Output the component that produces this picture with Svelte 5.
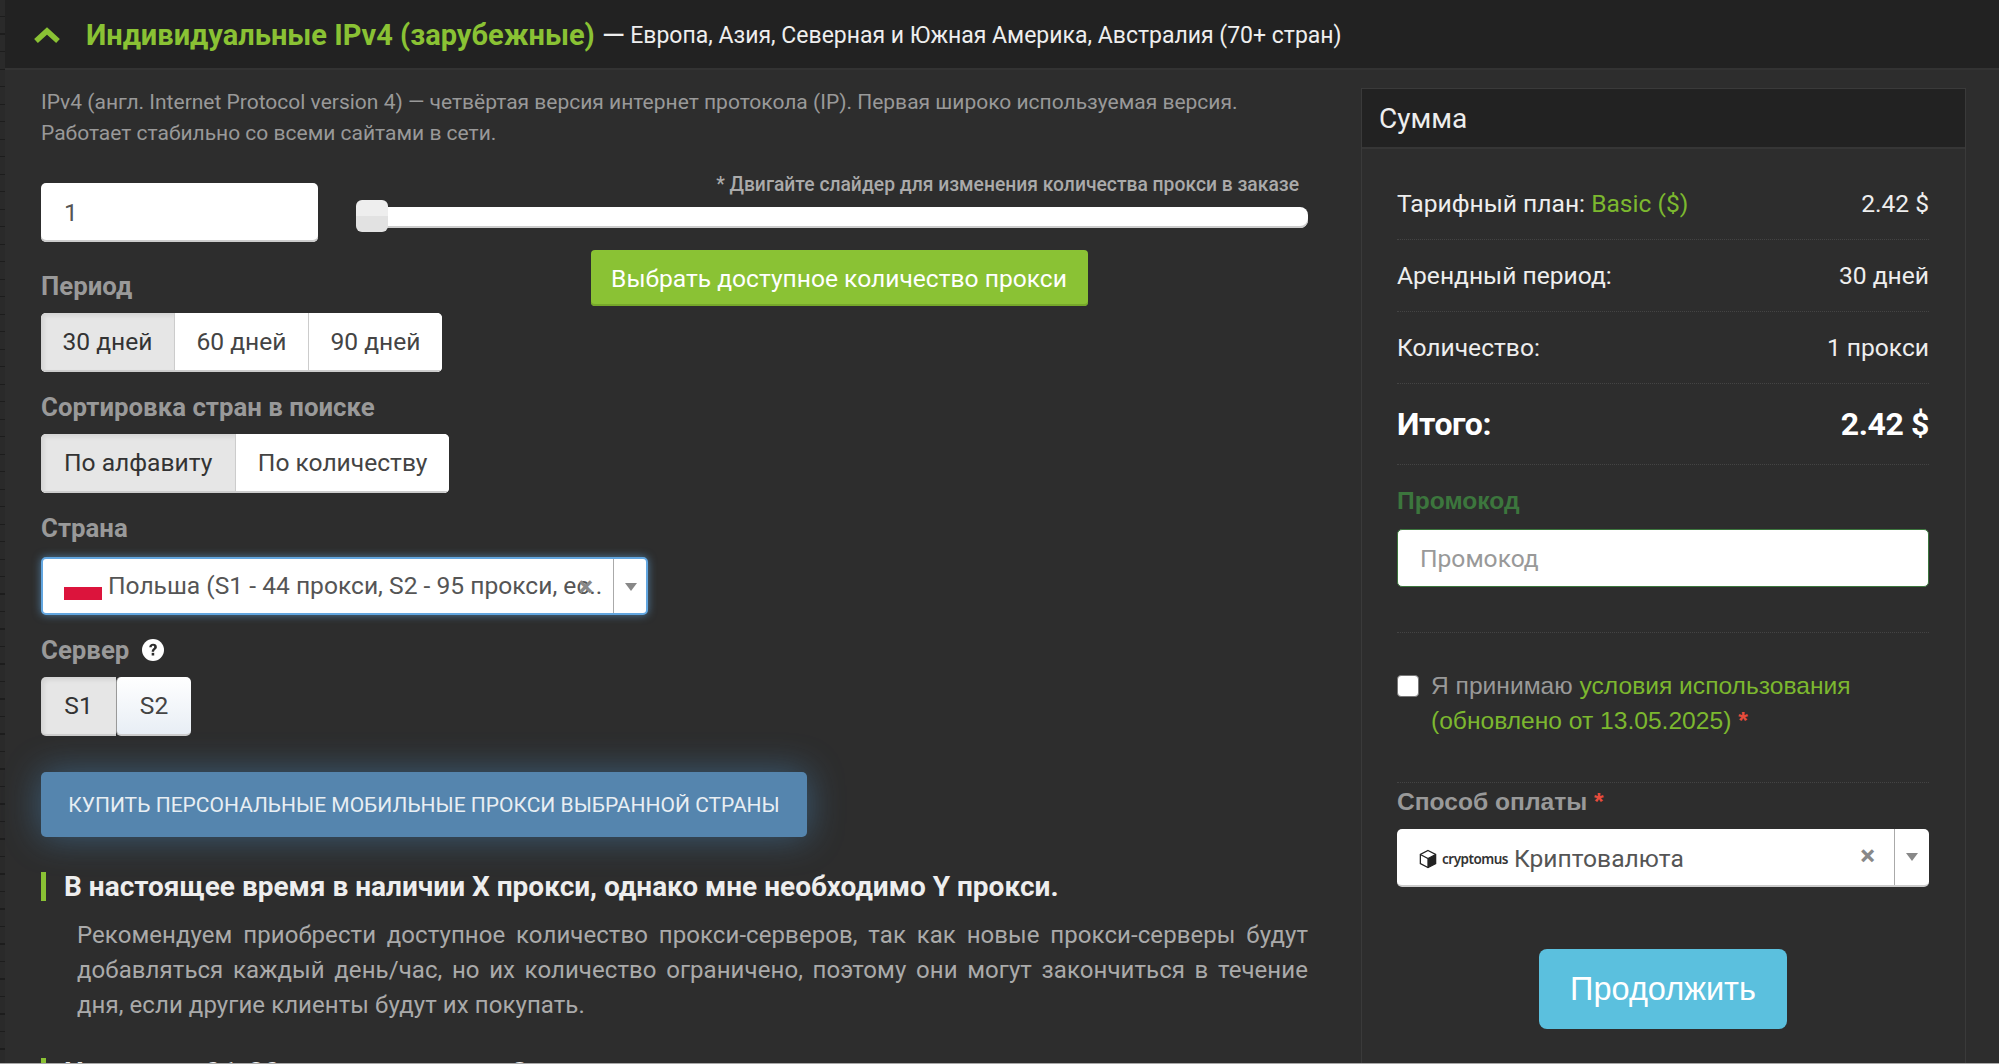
<script>
  const rows = [
    { label: 'Арендный период:', value: '30 дней' },
    { label: 'Количество:', value: '1 прокси' }
  ];
</script>

<div class="page">
  <header class="top">
    <svg class="chev" viewBox="0 0 28 18" aria-hidden="true"><path d="M3 15 L14 5 L25 15" fill="none" stroke="#8ac234" stroke-width="5.5" stroke-linejoin="miter"/></svg>
    <span class="title">Индивидуальные IPv4 (зарубежные)</span>
    <span class="sub"><span class="dash">—</span>Европа, Азия, Северная и Южная Америка, Австралия (70+ стран)</span>
  </header>

  <main class="main">
    <section class="left">
      <p class="intro">IPv4 (англ. Internet Protocol version 4) — четвёртая версия интернет протокола (IP). Первая широко используемая версия.<br />Работает стабильно со всеми сайтами в сети.</p>

      <div class="qty">
        <div class="qty-input">1</div>
        <div class="slider-col">
          <div class="hint">* Двигайте слайдер для изменения количества прокси в заказе</div>
          <div class="track"><span class="handle"></span></div>
          <button class="green">Выбрать доступное количество прокси</button>
        </div>
        <div class="period">
          <div class="lbl">Период</div>
          <div class="group">
            <span class="seg active">30 дней</span><span class="seg">60 дней</span><span class="seg">90 дней</span>
          </div>
        </div>
      </div>

      <div class="lbl l2">Сортировка стран в поиске</div>
      <div class="group">
        <span class="seg active wide">По алфавиту</span><span class="seg">По количеству</span>
      </div>

      <div class="lbl l3">Страна</div>
      <div class="select focus">
        <span class="flag"></span>
        <span class="seltext">Польша (S1 - 44 прокси, S2 - 95 прокси, ес..</span>
        <span class="clear over">×</span>
        <span class="sep"></span>
        <span class="arrow"></span>
      </div>

      <div class="lbl l4">Сервер
        <svg class="help" viewBox="0 0 20 20" aria-hidden="true"><circle cx="10" cy="10" r="10" fill="#fff"/><path d="M6.6 7.6c0-2 1.5-3.2 3.5-3.2s3.4 1.1 3.4 2.9c0 2.4-2.5 2.4-2.5 4.4H8.8c0-3 2.3-3 2.3-4.4 0-.7-.4-1.1-1.1-1.1-.8 0-1.2.5-1.2 1.4z" fill="#2d2d2d"/><rect x="8.8" y="12.6" width="2.3" height="2.4" fill="#2d2d2d"/></svg>
      </div>
      <div class="group servers">
        <span class="seg active s">S1</span><span class="seg s s2">S2</span>
      </div>

      <button class="buy">КУПИТЬ ПЕРСОНАЛЬНЫЕ МОБИЛЬНЫЕ ПРОКСИ ВЫБРАННОЙ СТРАНЫ</button>

      <h3 class="faq">В настоящее время в наличии X прокси, однако мне необходимо Y прокси.</h3>
      <p class="answer">Рекомендуем приобрести доступное количество прокси-серверов, так как новые прокси-серверы будут добавляться каждый день/час, но их количество ограничено, поэтому они могут закончиться в течение дня, если другие клиенты будут их покупать.</p>
      <h3 class="faq second">Начиная с 01-30 прокси или ниже?</h3>
    </section>

    <aside class="panel">
      <div class="panel-head">Сумма</div>
      <div class="panel-body">
        <div class="row"><span>Тарифный план: <em>Basic ($)</em></span><span>2.42 $</span></div>
        {#each rows as r}
          <div class="row"><span>{r.label}</span><span>{r.value}</span></div>
        {/each}
        <div class="row total"><span>Итого:</span><span>2.42 $</span></div>

        <div class="promo-lbl">Промокод</div>
        <div class="promo">Промокод</div>
        <div class="dots"></div>

        <div class="terms">
          <span class="check"></span>
          <span class="terms-text">Я принимаю <em>условия использования<br />(обновлено от 13.05.2025)</em> <b>*</b></span>
        </div>
        <div class="dots d2"></div>

        <div class="pay-lbl">Способ оплаты <b>*</b></div>
        <div class="select pay">
          <svg class="cube" viewBox="0 0 20 22" aria-hidden="true"><path d="M10 1.5 L18.5 6 V16 L10 20.5 L1.5 16 V6 Z" fill="#fff" stroke="#222" stroke-width="1.4"/><path d="M1.5 6 L10 10.5 L18.5 6 M10 10.5 V20.5" fill="none" stroke="#222" stroke-width="1.4"/><path d="M10 10.5 L18.5 6 V16 L10 20.5 Z" fill="#222"/></svg>
          <span class="crypto">cryptomus</span>
          <span class="paytext">Криптовалюта</span>
          <span class="clear">×</span>
          <span class="sep"></span>
          <span class="arrow"></span>
        </div>

        <div class="cta"><button class="continue">Продолжить</button></div>
      </div>
    </aside>
  </main>
  <div class="edge"></div>
</div>

<style>
  :global(body) { margin: 0; background: #2d2d2d; }
  .page {
    position: relative; height: 1064px; overflow: hidden; box-sizing: border-box;
    padding-left: 5px;
    background: repeating-linear-gradient(#2a2a2a 0 16px, #1d1d1d 16px 17.5px);
    font-family: Roboto, "Liberation Sans", sans-serif; color: #eee;
  }
  .edge { position: absolute; left: 0; right: 0; bottom: 0; height: 1px; background: #a8a8a8; }
  .top {
    height: 70px; box-sizing: border-box; background: #222; border-bottom: 2px solid #333;
    display: flex; align-items: center; padding: 2px 0 0 28px;
  }
  .chev { width: 28px; height: 18px; margin-right: 25px; }
  .title { color: #8ac234; font-size: 29px; font-weight: 700; margin-right: 7px; }
  .sub { color: #eee; font-size: 23px; display: inline-flex; align-items: center; }
  .dash { font-size: 30px; line-height: 1; margin-right: 5px; }
  .main { display: flex; padding-left: 36px; background: #2d2d2d; height: 994px; }
  .left { width: 1267px; flex: none; }
  .intro { margin: 17px 0 0; font-size: 21px; line-height: 31px; color: #999; }
  .qty {
    display: grid; grid-template-columns: 277px 1fr; column-gap: 39px;
    margin-top: 34px; grid-template-rows: 59px auto;
  }
  .qty-input {
    background: #fff; border-radius: 5px; color: #555; font-size: 24.6px;
    display: flex; align-items: center; padding-left: 23px; box-sizing: border-box;
    box-shadow: inset 0 -2px 0 #ccc;
  }
  .slider-col { grid-column: 2; grid-row: 1 / 3; display: flex; flex-direction: column; align-items: center; }
  .hint { align-self: flex-end; margin-right: 9px; color: #aaa; font-weight: 500; font-size: 19.3px; line-height: 24px; margin-top: -10px; }
  .track {
    position: relative; width: 100%; height: 21px; margin-top: 10px; background: #fff;
    border-radius: 0 8px 8px 0; box-shadow: inset 0 -2px 0 #ccc;
  }
  .handle {
    position: absolute; left: -1px; top: -7px; width: 32px; height: 32px; border-radius: 6px;
    background: linear-gradient(#eee 50%, #e2e2e2 50%);
  }
  .green {
    margin: 22px 0 0 13px; width: 497px; height: 56px; border: 0; border-radius: 4px; background: #8ac234;
    color: #fff; font: 400 24.6px Roboto, sans-serif; box-shadow: inset 0 -2px 0 #76a82a;
  }
  .period { grid-column: 1; grid-row: 2; white-space: nowrap; }
  .lbl { color: #999; font-weight: 700; font-size: 25.8px; line-height: 28px; }
  .period .lbl { margin-top: 30px; }
  .group { display: inline-flex; margin-top: 13px; background: #fff; border-radius: 5px; overflow: hidden; box-shadow: inset 0 -2px 0 #ccc; vertical-align: top; }
  .seg {
    height: 59px; box-sizing: border-box; display: flex; align-items: center; justify-content: center;
    padding: 0 21.5px; font-size: 24.6px; color: #444; border-left: 1px solid #ccc; background: #fff;
    border-bottom: 2px solid #ccc;
  }
  .seg:first-child { border-left: 0; }
  .seg.active { background: #e6e6e6; box-shadow: inset 3px 3px 4px rgba(0,0,0,.08); color: #333; }
  .seg.wide { padding: 0 23px; }
  .s { width: 75px; padding: 0; }
  .s.active { border-radius: 5px 0 0 5px; }
  .s2 { background: linear-gradient(#fff, #e8eef5); border-left: 1px solid #999; border-radius: 5px; margin-right: 0; }
  .l2 { margin-top: 21px; }
  .l3 { margin-top: 21px; }
  .l4 { margin-top: 21px; display: flex; align-items: center; gap: 13px; }
  .help { width: 22px; height: 22px; }
  .select {
    position: relative; background: #fff; height: 58px; border-radius: 5px;
    display: flex; align-items: center; color: #555; font-size: 24.6px; box-sizing: border-box;
  }
  .select.focus { width: 607px; margin-top: 15px; border: 2px solid #62a6e0; box-shadow: 0 0 9px rgba(102,175,233,.6); }
  .flag { position: absolute; left: 21px; top: 28px; width: 38px; height: 13px; background: #dc143c; }
  .seltext { position: absolute; left: 65px; white-space: nowrap; top: 13px; line-height: 28px; width: 503px; overflow: hidden; }
  .clear { position: absolute; color: #888; font-weight: 700; font-size: 28px; line-height: 28px; right: 54px; top: 13px; }
  .clear.over { right: 53px; top: 14px; }
  .sep { position: absolute; right: 34px; top: 0; bottom: 0; width: 1px; background: #aaa; }
  .focus .sep { right: 32px; }
  .arrow { position: absolute; right: 11px; top: 24px; width: 0; height: 0; border: 6.5px solid transparent; border-top: 8px solid #888; border-bottom: 0; }
  .focus .arrow { right: 9px; }
  .servers { overflow: visible; background: transparent; box-shadow: none; }
  .buy {
    display: block; margin-top: 36px; width: 766px; height: 65px; border: 0; border-radius: 5px; background: #5585ae;
    color: #e8eef3; font: 400 21px Roboto, sans-serif; box-shadow: 0 0 36px rgba(80,160,225,.42);
  }
  .faq {
    margin: 35px 0 0; padding-left: 18px; border-left: 5px solid #8ac234; color: #eee;
    font-size: 28px; font-weight: 700; line-height: 29px;
  }
  .answer {
    margin: 17px 0 0 36px; color: #aaa; font-size: 24px; line-height: 35px; text-align: justify; letter-spacing: .07px;
  }
  .second { margin-top: 35px; }

  .panel { margin: 18px 0 0 53px; width: 605px; flex: none; box-sizing: border-box; border: 1px solid #3a3a3a; border-bottom: 0; height: 980px; }
  .panel-head { height: 60px; background: #222; border-bottom: 2px solid #363636; box-sizing: border-box; display: flex; align-items: center; padding-left: 17px; font-size: 28px; color: #eee; }
  .panel-body { padding: 19px 36px 0 35px; }
  .row {
    display: flex; justify-content: space-between; align-items: center; height: 72px; box-sizing: border-box;
    border-bottom: 1px dotted #444; font-size: 24.6px; color: #eee;
  }
  .row em { color: #7cb82f; font-style: normal; }
  .row.total { height: 81px; font-size: 32px; font-weight: 700; color: #fff; letter-spacing: -.4px; }
  .promo-lbl { margin-top: 22px; color: #3c763d; font: 700 24.6px/28px "Liberation Sans", sans-serif; }
  .promo {
    margin-top: 14px; height: 58px; box-sizing: border-box; background: #fff; border: 1px solid #3c763d; border-radius: 5px;
    display: flex; align-items: center; padding-left: 22px; color: #999; font: 400 24.6px Roboto, sans-serif;
  }
  .dots { height: 0; border-bottom: 1px dotted #444; margin-top: 45px; }
  .terms { display: flex; margin-top: 35px; font: 400 24.6px/35px "Liberation Sans", sans-serif; color: #999; }
  .check { flex: none; width: 22px; height: 22px; background: #fff; border: 1px solid #777; border-radius: 4px; box-sizing: border-box; margin: 7px 12px 0 0; }
  .terms-text em { color: #7cb82f; font-style: normal; }
  .terms-text b { color: #e74c3c; font-weight: 700; }
  .d2 { margin-top: 44px; }
  .pay-lbl { margin-top: 5px; color: #999; font: 700 24.6px/28px "Liberation Sans", sans-serif; }
  .pay-lbl b { color: #e74c3c; }
  .select.pay { margin-top: 13px; border-bottom: 2px solid #ccc; }
  .cube { position: absolute; left: 22px; top: 20px; width: 18px; height: 20px; }
  .crypto { position: absolute; left: 45px; top: 20px; font: 600 13.5px/20px "Noto Sans", sans-serif; color: #333; letter-spacing: -.5px; }
  .paytext { position: absolute; left: 117px; top: 16px; line-height: 28px; }
  .cta { display: flex; justify-content: center; margin-top: 62px; }
  .continue { width: 248px; height: 80px; border: 0; border-radius: 8px; background: #5bc0de; color: #fff; font: 400 32.5px "Liberation Sans", sans-serif; }
</style>
